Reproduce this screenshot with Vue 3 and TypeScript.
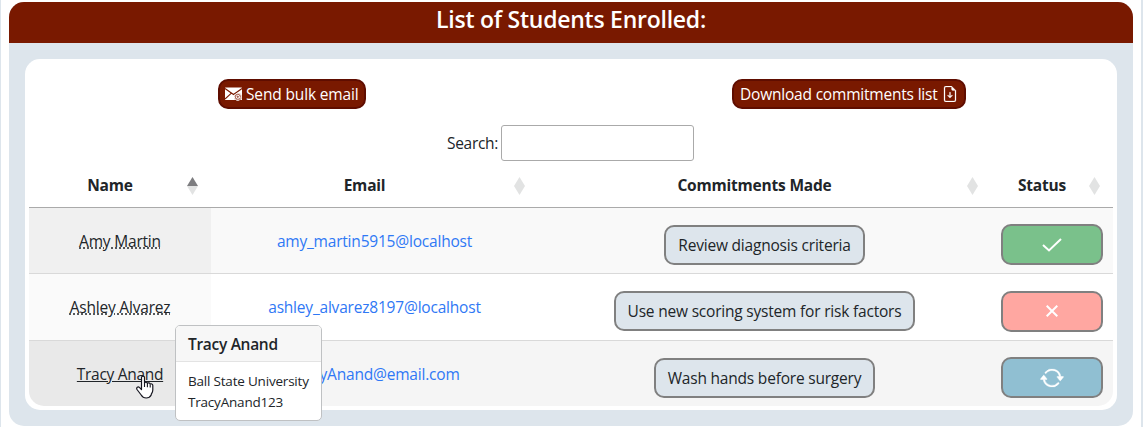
<script setup lang="ts">
interface Student {
  name: string
  email: string
  commitment: string
  status: 'done' | 'failed' | 'pending'
  active?: boolean
}

const columns = [
  { key: 'name', label: 'Name', sorted: true },
  { key: 'email', label: 'Email', sorted: false },
  { key: 'commitment', label: 'Commitments Made', sorted: false },
  { key: 'status', label: 'Status', sorted: false },
]

const students: Student[] = [
  { name: 'Amy Martin', email: 'amy_martin5915@localhost', commitment: 'Review diagnosis criteria', status: 'done' },
  { name: 'Ashley Alvarez', email: 'ashley_alvarez8197@localhost', commitment: 'Use new scoring system for risk factors', status: 'failed' },
  { name: 'Tracy Anand', email: 'TracyAnand@email.com', commitment: 'Wash hands before surgery', status: 'pending', active: true },
]
</script>

<template>
  <main class="page">
    <section class="card">
      <h2 class="title"><span>List of Students Enrolled:</span></h2>
      <div class="panel">
        <div class="actions">
          <div class="slot slot-left">
            <button class="action bulk">
              <svg width="17" height="14" viewBox="0 0 17 14">
                <rect width="17" height="12.500" y="0.5" rx="0.5" fill="#fff" />
                <path d="M0 1.500 8.500 7.500 17 1.500M0 12l6.400-5.800M10.600 6.200l2 1.600" fill="none" stroke="#791900" stroke-width="1.100" />
                <circle cx="12.800" cy="9.800" r="3.800" fill="#a85f4e" />
                <path d="M14.400 9.800a1.600 1.600 0 1 1-3.200 0 1.600 1.600 0 0 1 3.200 0v.6c0 1.500 1.900 1 1.900-.6a3.500 3.500 0 1 0-1.700 3" fill="none" stroke="#fff" stroke-width="1" />
              </svg>
              <span>Send bulk email</span>
            </button>
          </div>
          <div class="slot slot-right">
            <button class="action download">
              <span>Download commitments list</span>
              <svg width="16" height="16" viewBox="0 0 16 16" fill="#fff" stroke="#fff" stroke-width=".25">
                <path d="M8.5 6.5a.5.5 0 0 0-1 0v3.793L6.354 9.146a.5.5 0 1 0-.708.708l2 2a.5.5 0 0 0 .708 0l2-2a.5.5 0 0 0-.708-.708L8.5 10.293z" />
                <path d="M14 14V4.5L9.5 0H4a2 2 0 0 0-2 2v12a2 2 0 0 0 2 2h8a2 2 0 0 0 2-2M9.5 3A1.5 1.5 0 0 0 11 4.5h2V14a1 1 0 0 1-1 1H4a1 1 0 0 1-1-1V2a1 1 0 0 1 1-1h5.500z" />
              </svg>
            </button>
          </div>
        </div>
        <label class="search"><span>Search:</span><input type="text" /></label>
        <table class="students">
          <colgroup>
            <col class="c-name" /><col class="c-email" /><col class="c-commit" /><col class="c-status" />
          </colgroup>
          <thead>
            <tr>
              <th v-for="c in columns" :key="c.key">
                <div class="head">
                  <span class="label">{{ c.label }}</span>
                  <svg class="sort" width="11" height="18" viewBox="0 0 11 18">
                    <path d="M5.500 0 11 9H0z" :fill="c.sorted ? '#7d7d80' : '#e2e3e3'" />
                    <path d="M0 9h11L5.500 18z" fill="#e2e3e3" />
                  </svg>
                </div>
              </th>
            </tr>
          </thead>
          <tbody>
            <tr v-for="s in students" :key="s.name" :class="{ active: s.active }">
              <td class="name">
                <span class="who">{{ s.name }}
                  <svg v-if="s.active" class="pointer" width="18" height="24" viewBox="0 0 18 24">
                    <path d="M5.500 2.500C5.500.7 8.500.7 8.500 2.500V8c.5-1.200 2.700-1 2.900.4.700-1 2.700-.7 2.800.8.800-.8 2.600-.3 2.600 1.200V15c0 2-.8 3-1.600 4.300V20c-1.200 2.400-3 3-5 3-3 0-4-1.200-5-3L1 14.500c-1-2 1-3.300 2.600-1.900l1.900 2z" fill="#fff" stroke="#15151f" stroke-width="1.200" stroke-linejoin="round" />
                    <path d="M8.500 8v4M11.400 8.600V12.300M14.200 9.400v3.200" fill="none" stroke="#15151f" stroke-width="1.100" />
                  </svg>
                </span>
                <aside v-if="s.active" class="popover">
                  <h3><span>Tracy Anand</span></h3>
                  <p><span>Ball State University</span><br /><span>TracyAnand123</span></p>
                </aside>
              </td>
              <td class="email"><a>{{ s.email }}</a></td>
              <td class="boxed"><span class="chip" :class="'chip-' + s.status">{{ s.commitment }}</span></td>
              <td class="boxed">
                <span class="status" :class="s.status">
                  <svg v-if="s.status === 'done'" width="20" height="14" viewBox="0 0 20 14">
                    <path d="M1 7l6 5.500L19 1" fill="none" stroke="#fff" stroke-width="2" />
                  </svg>
                  <svg v-else-if="s.status === 'failed'" width="12" height="12" viewBox="0 0 12 12">
                    <path d="M.7.7l10.600 10.600M11.300.7.7 11.300" fill="none" stroke="#fff" stroke-width="2" />
                  </svg>
                  <svg v-else width="24" height="24" viewBox="0 0 16 16" fill="#fff" stroke="#fff" stroke-width=".3">
                    <path d="M11.534 7h3.932a.25.25 0 0 1 .192.41l-1.966 2.36a.25.25 0 0 1-.384 0l-1.966-2.36a.25.25 0 0 1 .192-.41m-11 2h3.932a.25.25 0 0 0 .192-.41L2.692 6.23a.25.25 0 0 0-.384 0L.342 8.59A.25.25 0 0 0 .534 9" />
                    <path d="M8 3c-1.552 0-2.940.707-3.857 1.818a.5.5 0 1 1-.771-.636A6.002 6.002 0 0 1 13.917 7H12.900A5 5 0 0 0 8 3M3.100 9a5.002 5.002 0 0 0 8.757 2.182.5.5 0 1 1 .771.636A6.002 6.002 0 0 1 2.083 9z" />
                  </svg>
                </span>
              </td>
            </tr>
          </tbody>
        </table>
      </div>
    </section>
  </main>
</template>

<style>
body { background: #fff; overflow: hidden; }
</style>

<style scoped>
* { box-sizing: border-box; }
.page {
  width: 1143px;
  height: 427px;
  padding: 2px 8px 0;
  border: solid #dde5ec;
  border-width: 0 2px 0 1px;
  font: 15.5px/24px "Open Sans", "Noto Sans", sans-serif;
  letter-spacing: -0.2px;
  color: #212529;
}
svg { display: block; flex: none; }
.card { width: 1124px; height: 424px; background: #dde5ec; border-radius: 15px; }
.title {
  height: 41px;
  margin: 0;
  background: #791900;
  border-radius: 15px 15px 0 0;
  color: #fff;
  font-size: 23px;
  font-weight: 600;
  line-height: 35px;
  letter-spacing: -0.25px;
  text-align: center;
}
.panel {
  width: 1092px;
  height: 351px;
  margin: 16px;
  padding: 20px 4px 4px;
  background: #fff;
  border-radius: 15px;
}
.actions { display: flex; height: 30px; }
.slot { display: flex; }
.slot-left { width: 703px; padding-left: 189px; }
.action {
  display: flex;
  align-items: center;
  height: 30px;
  padding: 0 5px;
  border: 2px solid #5f0d00;
  border-radius: 10px;
  background: #791900;
  color: #fff;
  font: inherit;
  letter-spacing: inherit;
  white-space: nowrap;
}
.bulk { width: 148px; gap: 4px; letter-spacing: -0.15px; }
.download { width: 234px; padding: 0 6px; justify-content: space-between; }
.search { display: flex; align-items: center; height: 36px; margin: 16px 0 0 418px; }
.search span { width: 54px; letter-spacing: -0.3px; }
.search input { width: 193px; height: 36px; border: 1px solid #aaa; border-radius: 3px; background: #fff; }
.students { width: 1084px; table-layout: fixed; border-collapse: separate; border-spacing: 0; }
.c-name { width: 182px; }
.c-email { width: 327px; }
.c-commit { width: 453px; }
.c-status { width: 122px; }
th { height: 47px; padding: 0 13px 0 0; border-bottom: 1px solid #aaa; font-weight: 700; }
.head { display: flex; align-items: center; height: 24px; margin-top: 3px; }
.label { flex: 1; text-align: center; padding: 0 0 2px 4px; }
td {
  position: relative;
  height: 67px;
  padding: 0;
  border-bottom: 1px solid #d9d9d9;
  text-align: center;
  vertical-align: middle;
  background: #fff;
}
td.boxed { padding-top: 8px; }
tr:first-child td { height: 66px; background: #f9f9f9; }
td.name { background: #fafafa; }
tr:first-child td.name { background: #f0f0f0; }
tr.active td { height: 65px; background: #f5f5f5; border-bottom: 0; }
tr.active td.name { background: #e9e9e9; border-bottom-left-radius: 15px; }
tr.active td:last-child { border-bottom-right-radius: 15px; }
.who { position: relative; text-decoration: underline dotted; }
.active .who { text-decoration: underline solid; letter-spacing: -0.3px; }
.email a { color: #2f78f5; }
.chip {
  display: inline-block;
  height: 40px;
  line-height: 37px;
  border: 2px solid #808080;
  border-radius: 10px;
  background: #dde5ec;
  vertical-align: top;
  white-space: nowrap;
}
.chip-done { width: 201px; }
.chip-failed { width: 301px; }
.chip-pending { width: 221px; }
.status {
  display: inline-flex;
  align-items: center;
  justify-content: center;
  width: 102px;
  height: 41px;
  border: 2px solid #808080;
  border-radius: 10px;
  vertical-align: top;
}
.done { background: #7ac18b; }
.failed { background: #ffa7a1; }
.pending { background: #90bfd2; }
.pointer { position: absolute; left: 59px; top: 12px; z-index: 3; }
.popover {
  position: absolute;
  left: 146px;
  top: -16px;
  z-index: 2;
  width: 147px;
  height: 96px;
  border: 1px solid #bfc1c3;
  border-radius: 5px;
  background: #fff;
  text-align: left;
  overflow: hidden;
}
.popover h3 {
  height: 36px;
  margin: 0;
  padding: 0 12px;
  border-bottom: 1px solid #e3e3e3;
  background: #f7f7f7;
  font-size: 15.5px;
  font-weight: 600;
  line-height: 36px;
  letter-spacing: -0.3px;
}
.popover p { margin: 0; padding: 9px 12px; font-size: 13.5px; line-height: 21px; white-space: nowrap; }
</style>
